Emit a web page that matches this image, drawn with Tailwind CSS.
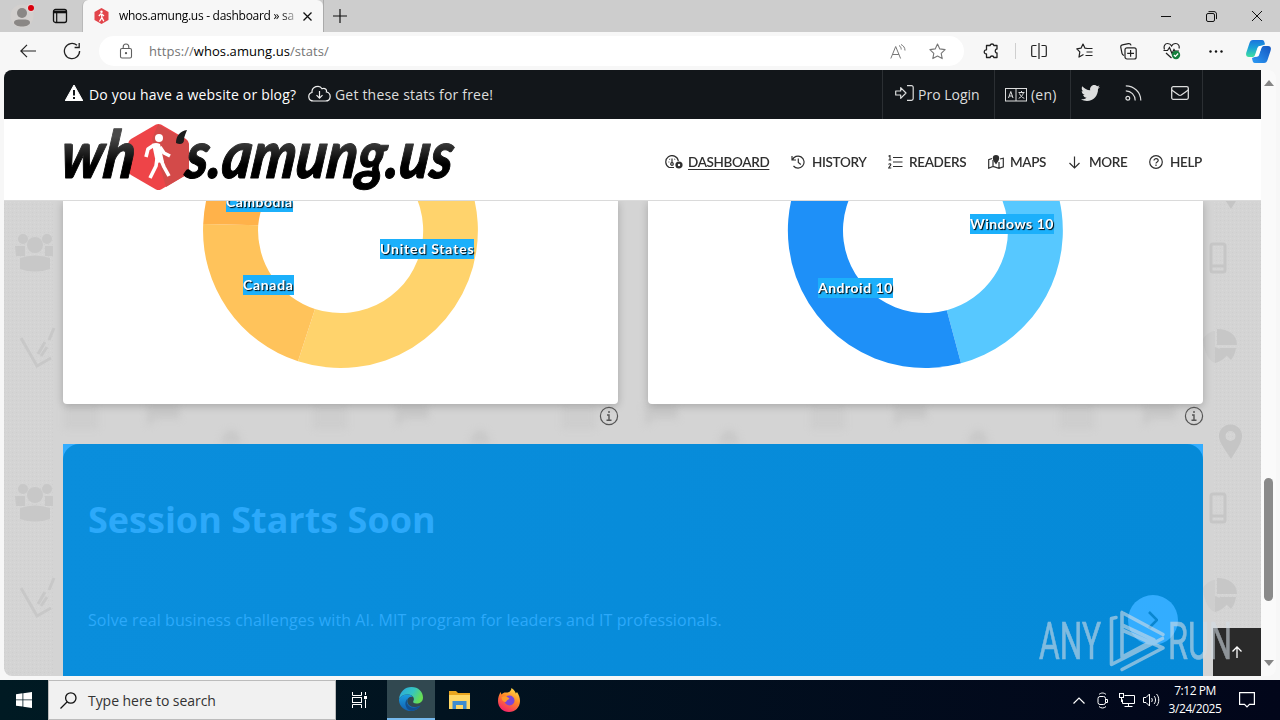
<!DOCTYPE html>
<html lang="en">
<head>
    <meta charset="UTF-8">
    <meta name="viewport" content="width=device-width, initial-scale=1.0">
    <title>whos.amung.us - dashboard</title>
    <script src="https://cdn.jsdelivr.net/npm/@tailwindcss/browser@4"></script>
</head>
<body class="w-[1280px] h-[720px] overflow-hidden bg-[#f7f7f7] font-['Open_Sans',sans-serif] text-black flex flex-col">

    <!-- Tab strip -->
    <div class="h-8 shrink-0 bg-[#cdcdcd] flex items-stretch">
        <div class="w-[82px] flex items-center pl-[10px] gap-[17px] rounded-br-md">
            <svg class="w-6 h-6" viewBox="0 0 24 24">
                <circle cx="12" cy="12" r="11.5" fill="#d3d0ce"/>
                <circle cx="12" cy="9" r="5" fill="#8a8785"/>
                <path d="M4 18.500c0-2.500 3-3 8-3s8 .5 8 3c0 2.500-4 4-8 4s-8-1.500-8-4z" fill="#8a8785"/>
                <circle cx="21" cy="4" r="4.200" fill="#e3d5d5"/>
                <circle cx="21" cy="4" r="3" fill="#d9000d"/>
            </svg>
            <svg class="w-[18px] h-[18px]" viewBox="0 0 18 18" fill="none" stroke="#111">
                <rect x="2.500" y="2.500" width="13" height="13" rx="2" stroke-width="1.300"/>
                <path d="M2.500 5h13" stroke-width="2.600"/><path d="M5.700 5v10.500" stroke-width="1.200"/>
            </svg>
        </div>
        <div class="w-[241px] bg-[#f7f7f7] rounded-t-md flex items-center pl-[11px] border-l border-[#b9b9b9]">
            <svg class="w-[15px] h-4 shrink-0" viewBox="0 0 15 16">
                <path d="M7.500 0l7 4v8l-7 4-7-4V4z" fill="#e2454b"/>
                <circle cx="7.500" cy="3.700" r="1.200" fill="#fff"/>
                <path d="M7.300 5.500L4.800 8M7.400 5.500l.5 4-2.500 4M7.800 9.300l2 4M7.700 6l2.300 2" stroke="#fff" stroke-width="1.300" fill="none"/>
            </svg>
            <span class="ml-[10px] w-[177px] h-5 text-[12px] leading-5 tracking-[-0.28px] whitespace-nowrap bg-linear-to-r from-black from-90% to-[#ccc] bg-clip-text text-transparent">whos.amung.us - dashboard » sa</span>
            <svg class="w-[9px] h-[9px] ml-[7px] shrink-0" viewBox="0 0 9 9" stroke="#111" stroke-width="1.300"><path d="M.5.5l8 8M8.500.5l-8 8"/></svg>
        </div>
        <div class="flex-1 flex items-center border-l border-[#aaa] pl-[9px] pr-[18px]">
            <svg class="w-[14px] h-[14px]" viewBox="0 0 14 14" stroke="#111" stroke-width="1.200"><path d="M7 0v14M0 7h14"/></svg>
            <div class="ml-auto flex items-center gap-[35px]">
                <svg class="w-[10px] h-[10px]" viewBox="0 0 10 10" stroke="#111"><path d="M0 5.500h10"/></svg>
                <svg class="w-[11px] h-[11px]" viewBox="0 0 11 11" fill="none" stroke="#111"><rect x=".5" y="2.500" width="8" height="8" rx="1.500"/><path d="M2.500.6H8c1.500 0 2.500 1 2.500 2.500v5"/></svg>
                <svg class="w-[10px] h-[10px]" viewBox="0 0 10 10" stroke="#111"><path d="M0 0l10 10M10 0L0 10"/></svg>
            </div>
        </div>
    </div>

    <!-- Toolbar -->
    <div class="h-[38px] shrink-0 flex items-center pl-5 pr-[9px]">
        <svg class="w-4 h-[14px]" viewBox="0 0 16 14" fill="none" stroke="#222" stroke-width="1.200"><path d="M16 7H.8M7 .8L.8 7 7 13.200"/></svg>
        <svg class="w-[18px] h-[18px] ml-[27px]" viewBox="0 0 18 18" fill="none" stroke="#222" stroke-width="1.300"><path d="M16.600 9A7.600 7.600 0 1 1 14 3.300M16.200 1v4.500h-4.600"/></svg>
        <div class="ml-[18px] w-[865px] h-[30px] rounded-full bg-white flex items-center pl-5 pr-[18px]">
            <svg class="w-[14px] h-4" viewBox="0 0 14 16" fill="none" stroke="#5f5f5f" stroke-width="1.100"><rect x="1.500" y="5.500" width="11" height="9.500" rx="1.500"/><path d="M4.200 5.500V4a2.800 3 0 0 1 5.600 0v1.500"/><circle cx="7" cy="10.200" r=".6" fill="#5f5f5f"/></svg>
            <span class="ml-4 mt-px text-[13px] tracking-[0.06px] text-[#757575] whitespace-nowrap">https://<span class="text-black">whos.amung.us</span>/stats/</span>
            <svg class="w-4 h-[15px] ml-auto" viewBox="0 0 16 15" fill="none" stroke="#777"><path d="M.8 14.500L5.700 2.500l4.900 12M2.500 10.500h6.400M9 1.500c1.600.9 2.200 2.300 2.200 4M11 .5c2.600 1.200 4 3.300 4 6"/></svg>
            <svg class="w-[17px] h-[17px] ml-[23px]" viewBox="0 0 17 17" fill="none" stroke="#777" stroke-width="1.100" stroke-linejoin="round"><path d="M8.500 1l2.300 4.900 5.300.7-3.900 3.700 1 5.300-4.700-2.600-4.700 2.600 1-5.300L.9 6.600l5.300-.7z"/></svg>
        </div>
        <svg class="w-[17px] h-[17px] ml-[19px]" viewBox="0 0 17 17" fill="none" stroke="#222" stroke-width="1.300" stroke-linejoin="round"><path d="M5 2.500h2.200c0-2 3.600-2 3.600 0H14V6c-2.300-.2-2.300 4.200 0 4v4.500h-3.200c0-2-3.600-2-3.600 0H3.500V11C.5 11.300.5 6.500 3.500 6.800V2.500z"/></svg>
        <div class="w-px h-4 bg-[#cfcfcf] ml-[15px]"></div>
        <svg class="w-4 h-4 ml-[15px]" viewBox="0 0 16 16" fill="none" stroke="#222" stroke-width="1.200"><path d="M5.500 2.500H2A1.300 1.300 0 0 0 .7 3.800v8.400A1.300 1.300 0 0 0 2 13.500h3.500M10.500 2.500H14a1.300 1.300 0 0 1 1.300 1.300v8.400a1.300 1.300 0 0 1-1.300 1.300h-3.500M8 0v16"/></svg>
        <svg class="w-[17px] h-4 ml-[29px]" viewBox="0 0 17 16" fill="none" stroke="#222" stroke-width="1.200" stroke-linejoin="round"><path d="M11.500 5.500L9 5.200 7 1 5 5.200.8 5.800l3 3.100-.8 5.200 4.500-2.600M10 5.500h6.500M10.500 9H16.500M9.500 12.500h7"/></svg>
        <svg class="w-[17px] h-[17px] ml-[27px]" viewBox="0 0 17 17" fill="none" stroke="#222" stroke-width="1.200"><path d="M4 12.500C2.700 12 2.200 11.300 2 10.300L.8 4.400C.5 3 1.200 2.200 2.400 1.900l6-1.200c1.300-.2 2.300.4 2.700 1.700"/><rect x="5" y="4.800" width="11.200" height="11.200" rx="2"/><path d="M10.600 7v6.800M7.200 10.400H14"/></svg>
        <svg class="w-[18px] h-[18px] ml-[26px]" viewBox="0 0 18 18" fill="none" stroke="#222" stroke-width="1.200"><path d="M1.500 7.500C.3 4 2 1.500 4.500 1.500 6.500 1.500 8 2.800 8.600 4c.6-1.200 2-2.500 4.100-2.500 2.500 0 4.100 2.300 3.300 5M.5 8.500h4l2-3 2.500 6 2-4 1 1.500h4M3 11l5.500 5"/><circle cx="13" cy="13" r="4.200" fill="#15803d" stroke="none"/><path d="M10.900 13l1.500 1.500 2.700-3" stroke="#fff"/></svg>
        <svg class="w-[14px] h-[3px] ml-[28px]" viewBox="0 0 14 3" fill="#111"><circle cx="1.500" cy="1.500" r="1.200"/><circle cx="7" cy="1.500" r="1.200"/><circle cx="12.500" cy="1.500" r="1.200"/></svg>
        <svg class="w-[25px] h-[23px] ml-auto" viewBox="0 0 25 23">
            <defs>
                <linearGradient id="copA" x1="0" y1="0" x2="0" y2="1"><stop offset="0" stop-color="#1b74dd"/><stop offset=".45" stop-color="#1aa0d8"/><stop offset="1" stop-color="#3fe0a0"/></linearGradient>
                <linearGradient id="copB" x1="1" y1="0" x2="0" y2="1"><stop offset="0" stop-color="#1455c0"/><stop offset="1" stop-color="#2c9bf5"/></linearGradient>
            </defs>
            <path d="M7 0h9c2 0 2.500 2 3 4.500l-5 1.500c-1.500 0-2.200 1-2.800 2.500L9 15c-.6 1.500-1.500 2-3 2H3c-3 0-3.400-2.500-2.500-5L3.500 3C4.200 1 5 0 7 0z" fill="url(#copA)"/>
            <path d="M18 23H9c-2 0-2.500-2-3-5l4-1.500c1.500 0 2.500-1 3-2.500L15.500 8c.6-1.500 1.500-2 3-2H22c3 0 3.400 2.500 2.500 5l-3 9c-.7 2-1.500 3-3.500 3z" fill="url(#copB)"/>
            <path d="M12 7.500L9.500 15c-.4 1-.8 1.500-1.500 1.800h3c1 0 1.800-.8 2.200-2L15.500 7c.3-.6.600-1 1-1h-2.500c-1 0-1.600.5-2 1.500z" fill="#fff"/>
        </svg>
    </div>

    <!-- Viewport -->
    <div class="mx-1 h-[606px] shrink-0 flex rounded-lg overflow-hidden bg-[#fafafa]">
        <div class="w-[1257px] shrink-0 flex flex-col relative bg-[#d4d4d4]">
            <div class="h-[49px] shrink-0 bg-[#12161a] text-[#dcdddd] flex items-stretch pl-[61px] pr-[58px] text-[14px]">
                <div class="flex items-center whitespace-nowrap text-white">
                    <svg class="w-[18px] h-4 -mt-1" viewBox="0 0 18 16"><path d="M9 0L18 16H0z" fill="#fff" stroke="#fff" stroke-linejoin="round"/><path d="M9 5v5.500M9 12v2" stroke="#12161a" stroke-width="2"/></svg>
                    <span class="ml-[6px] w-[207px] tracking-[0.17px]">Do you have a website or blog?</span>
                    <svg class="w-[23px] h-[17px] ml-3 -mt-[3px]" viewBox="0 0 23 17" fill="none" stroke="#eee" stroke-width="1.200"><path d="M5.500 16C-.5 16-.5 8.500 4 7.500 3.500 1.500 11.500-.8 14 3.800c3-1.200 5 .8 4.400 3.200C23.600 8 23.500 16 17.500 16zM11.500 6v7M8.500 10.200l3 3 3-3"/></svg>
                    <span class="ml-1 text-[#dcdddd] tracking-[0.19px]">Get these stats for free!</span>
                </div>
                <div class="ml-auto flex items-stretch whitespace-nowrap">
                    <div class="w-[112px] border-l border-[#2b2f33] flex items-center pl-3">
                        <svg class="w-[19px] h-4 -mt-[3px]" viewBox="0 0 19 16" fill="none" stroke="#dcdddd" stroke-width="1.200" stroke-linejoin="round"><path d="M.7 6v4h5v3.300L11 8 5.700 2.700V6zM12 .7h4.500A1.700 1.700 0 0 1 18.200 2.400v11.200a1.700 1.700 0 0 1-1.700 1.700H12"/></svg>
                        <span class="ml-1">Pro Login</span>
                    </div>
                    <div class="w-[76px] border-l border-[#2b2f33] flex items-center pl-[10px]">
                        <svg class="w-[22px] h-[14px]" viewBox="0 0 22 14" fill="none" stroke="#dcdddd"><rect x=".5" y=".5" width="21" height="12.500"/><path d="M11 .5V13M3.500 10l2.300-6.500L8 10M4.300 8h3M13.500 4.500h6M16.500 3v1.500M18.500 4.500c-.8 3-2.500 4.800-4.800 5.800M14.500 5.500c1 2.500 2.500 4 4.800 4.800"/></svg>
                        <span class="ml-1 tracking-[0.2px]">(en)</span>
                    </div>
                    <div class="w-[133px] border-x border-[#2b2f33] flex items-center pl-[10px] pb-[3px]">
                        <svg class="w-[19px] h-4" viewBox="0 0 19 16" fill="#dcdddd"><path d="M19 2l-2 2c.2 6.500-4.500 12-11 12-2.200 0-4.300-.6-6-1.700 2 .2 4-.4 5.600-1.600-1.600 0-3-1.200-3.500-2.700h1.600C1.900 9.500.7 8 .7 6.100l1.700.5C.7 5.400.2 3.200 1.300 1.300 3.200 3.700 6 5.200 9.200 5.300 8.600 2.600 10.500 0 13.200 0c1.100 0 2.200.5 2.900 1.300L18.500.4 17 2.500z"/></svg>
                        <svg class="w-[17px] h-4 ml-[25px]" viewBox="0 0 17 16" fill="none" stroke="#dcdddd" stroke-width="1.200"><circle cx="2.800" cy="13.200" r="1.900"/><path d="M.8 5.800c5.200 0 9.400 4.200 9.400 9.700M.8.8C8.800.8 15.800 7 15.800 15.500"/></svg>
                        <svg class="w-[18px] h-[14px] ml-[29px]" viewBox="0 0 18 14" fill="none" stroke="#dcdddd" stroke-width="1.300"><rect x=".7" y=".7" width="16.600" height="12.600" rx="1.500"/><path d="M.7 4l7 5c1 .6 1.600.6 2.600 0l7-5"/></svg>
                    </div>
                </div>
            </div>

            <div class="h-[82px] shrink-0 bg-white border-b border-[#dadada] flex items-center justify-between pl-[59px] pr-[58px] relative z-10">
                <svg class="w-[394px] h-[81px] overflow-visible" viewBox="63 119 394 81">
                    <defs><linearGradient id="ink" x1="0" y1="0" x2="0" y2="1"><stop offset=".3" stop-color="#4a4a4a"/><stop offset=".65" stop-color="#000"/></linearGradient></defs>
                    <path d="M156 124.500q2.500-1.200 5 0l25 14.500q3 2 3 5v26q0 3-3 5l-25 14.500q-2.500 1.200-5 0l-25-14.500q-3-2-3-5v-26q0-3 3-5z" fill="#ee4448"/>
                    <path d="M158 124.500L186 140q3 2 3 5v25q0 3-3 5l-20 12-14-48z" fill="#d34a49"/>
                    <circle cx="159" cy="138" r="4" fill="#fff"/>
                    <path d="M154 145l-6 4-2 8M157 159l-1 7-6 12M161 160l3 7 5 9M160 147l4 6 6 3" fill="none" stroke="#fff" stroke-width="3.600" stroke-linejoin="round"/>
                    <path d="M152 144q4-2 8 0l4 18-8 1z" fill="#fff"/>
                    <g font-family="Lato, sans-serif" font-weight="900" font-style="italic" fill="url(#ink)" stroke="url(#ink)" stroke-width="1" stroke-linejoin="round">
                        <text transform="translate(59 178) skewX(-7)" font-size="66" textLength="74" lengthAdjust="spacingAndGlyphs">wh</text>
                        <text transform="translate(184 178) skewX(-7)" font-size="66" textLength="267" lengthAdjust="spacingAndGlyphs">s.amung.us</text>
                    </g>
                    <path d="M187 130c-7 1-11 6-11 13 4 2 8 1 8-3 0-4 2-7 3-10z" fill="#1d1d1d"/>
                </svg>
                <nav class="flex items-center font-['Lato',sans-serif] font-semibold text-[13.5px] tracking-[-0.35px] text-[#2f2f2f] whitespace-nowrap pt-[5px]">
                    <svg class="w-[18px] h-[14px]" viewBox="0 0 18 14" fill="none" stroke="#2f2f2f" stroke-width="1.200"><path d="M9 12.500H4.200A6.300 6.300 0 1 1 13.300 6M7 3.500V8"/><circle cx="7" cy="9" r="1.300"/><path d="M3.500 7h.8M4.500 4l.5.500M10 4l-.5.5"/><circle cx="14" cy="10" r="2.400" stroke-width="2.400"/></svg>
                    <span class="ml-[5px] w-[81px] mt-px underline underline-offset-2">DASHBOARD</span>
                    <svg class="w-[14px] h-[14px] ml-[22px]" viewBox="0 0 14 14" fill="none" stroke="#2f2f2f" stroke-width="1.200"><path d="M1 1v4h4M1.400 5A6 6 0 1 1 2.500 11M7.300 3.500v4l2.500 2"/></svg>
                    <span class="ml-[7px] w-[55px] mt-px">HISTORY</span>
                    <svg class="w-[15px] h-[14px] ml-[21px]" viewBox="0 0 15 14" fill="none" stroke="#2f2f2f" stroke-width="1.100"><path d="M5 2.500h9.500M5 7h9.500M5 11.500h9.500M.5 1.200l1.500-.7V5M.5 5H3.300M.5 9.500c1-1.300 2.700-.6 2.200.6L.6 13H3.300"/></svg>
                    <span class="ml-[6px] w-[58px] mt-px">READERS</span>
                    <svg class="w-[16px] h-[14px] ml-[21px]" viewBox="0 0 16 14" fill="none" stroke="#2f2f2f" stroke-width="1.200"><path d="M4 3.500L.7 4.700v8.500L5 11.500l6 1.800 4.300-1.500V3.200L12 4M5 5v6.500M11 7v6"/><path d="M8 9.500C6 6.500 4.800 5 4.800 3.200a3.200 3.200 0 0 1 6.400 0C11.200 5 10 6.500 8 9.500z" fill="#2f2f2f" stroke="none"/></svg>
                    <span class="ml-[6px] w-[36px] mt-px">MAPS</span>
                    <svg class="w-[13px] h-[13px] ml-[22px]" viewBox="0 0 13 13" fill="none" stroke="#2f2f2f" stroke-width="1.200"><path d="M6.500 0.500v11.500M1.500 7l5 5 5-5"/></svg>
                    <span class="ml-[8px] w-[38px] mt-px">MORE</span>
                    <svg class="w-[14px] h-[14px] ml-[22px]" viewBox="0 0 14 14" fill="none" stroke="#2f2f2f" stroke-width="1.200"><circle cx="7" cy="7" r="6.300"/><path d="M5 5.500c0-2.500 4.200-2.300 4.200 0C9.200 7 7 6.800 7 8.500M7 9.500v1.500"/></svg>
                    <span class="ml-[7px] w-[33px] mt-px">HELP</span>
                </nav>
            </div>

            <!-- Repeating backdrop icons -->
            <svg class="absolute left-0 top-[131px] w-[1257px] h-[475px]" viewBox="4 201 1257 475">
                <defs>
                    <g id="people" fill="#c8c8c8"><circle cx="8" cy="5" r="5"/><circle cx="32" cy="5" r="5"/><circle cx="20" cy="11" r="8"/><path d="M0 12h10v10H1zM30 12h8v10h-8z"/><path d="M5 24q15-5 30 0v11q-15 5-30 0z"/></g>
                    <path id="check" d="M0 0l16 28 14-8M17 16l7-12M20 18l6-9M28 2l5-12" fill="none" stroke="#c8c8c8" stroke-width="3"/>
                    <g id="phone" fill="none" stroke="#c6c6c6" stroke-width="3"><rect x="0" y="0" width="14" height="28" rx="2"/><path d="M0 22h14"/></g>
                    <g id="pie" fill="#c7c7c7"><path d="M0 16v16q8-2 14-10z"/><path d="M2-2v16h20C22 4 14-2 2-2z"/><path d="M21 17H4l12 12q4-5 5-12z"/><path d="M-12 8q6-8 12-8v32q-10-4-12-24z" opacity=".5"/></g>
                    <path id="pin" d="M12 34C6 24 0 18 0 11a11.500 11.500 0 0 1 23 0c0 7-5 13-11 23zM11.500 6a5 5 0 1 0 0 10 5 5 0 0 0 0-10z" fill="#c5c5c5"/>
                    <filter id="soft"><feGaussianBlur stdDeviation="3"/></filter>
                    <filter id="faint"><feGaussianBlur stdDeviation=".7"/></filter>
                    <pattern id="dots" width="4" height="4" patternUnits="userSpaceOnUse"><rect width="1" height="1" fill="#cecece"/><rect x="2" y="2" width="1" height="1" fill="#d9d9d9"/></pattern>
                </defs>
                <rect x="4" y="201" width="50" height="475" fill="url(#dots)"/>
                <rect x="1213" y="201" width="48" height="475" fill="url(#dots)"/>
                <g filter="url(#faint)">
                    <use href="#people" x="15" y="234"/><use href="#people" x="15" y="484"/>
                    <use href="#check" x="21" y="338"/><use href="#check" x="21" y="588"/>
                    <use href="#phone" x="1211" y="244"/><use href="#phone" x="1211" y="494"/>
                    <use href="#pie" x="1215" y="331"/><use href="#pie" x="1215" y="580"/>
                    <use href="#pin" x="1219" y="175"/><use href="#pin" x="1219" y="425"/>
                </g>
                <g filter="url(#soft)" fill="#c9c9c9">
                    <path d="M64 405h34v24H64zM313 405h34v24h-34zM562 405h34v24h-34zM811 405h34v24h-34zM1060 405h34v24h-34z" opacity=".6"/>
                    <path d="M146 405h34v14h-24l-8 8zM395 405h34v14h-24l-8 8zM644 405h34v14h-24l-8 8zM893 405h34v14h-24l-8 8zM1142 405h34v14h-24l-8 8z"/>
                    <path d="M221 444a10 14 0 0 1 20 0zM470 444a10 14 0 0 1 20 0zM719 444a10 14 0 0 1 20 0zM968 444a10 14 0 0 1 20 0z"/>
                </g>
            </svg>

            <!-- Chart cards -->
            <div class="flex gap-[30px] px-[59px] h-[203px] shrink-0 relative">
                <div class="w-[555px] shrink-0 bg-white rounded-b-[4px] shadow-[0_2px_8px_#00000038] relative">
                    <svg class="w-full h-full" viewBox="63 201 555 203">
                        <path d="M340.500 93A137.500 137.500 0 1 1 298 361.300L315 308.900A82.500 82.500 0 1 0 340.500 148z" fill="#ffd36c"/>
                        <path d="M298 361.300A137.500 137.500 0 0 1 203.200 224L258.200 225.300A82.500 82.500 0 0 0 315 308.900z" fill="#ffc35b"/>
                        <path d="M203.200 224A137.500 137.500 0 0 1 230 148L276 182A82.500 82.500 0 0 0 258.200 225.300z" fill="#ffb24a"/>
                    </svg>
                    <span class="absolute left-[163px] -top-[9px] w-[67px] h-5 bg-[#1cb0fb] text-white font-['Lato',sans-serif] font-bold text-[14px] leading-5 tracking-[0.5px] whitespace-nowrap text-shadow-[1px_1px_1px_#000]">Cambodia</span>
                    <span class="absolute left-[317px] top-[38px] w-[94px] h-5 bg-[#1cb0fb] text-white font-['Lato',sans-serif] font-bold text-[14px] leading-5 tracking-[0.8px] whitespace-nowrap text-shadow-[1px_1px_1px_#000]">United States</span>
                    <span class="absolute left-[180px] top-[74px] w-[51px] h-5 bg-[#1cb0fb] text-white font-['Lato',sans-serif] font-bold text-[14px] leading-5 tracking-[0.7px] whitespace-nowrap text-shadow-[1px_1px_1px_#000]">Canada</span>
                </div>
                <div class="w-[555px] shrink-0 bg-white rounded-b-[4px] shadow-[0_2px_8px_#00000038] relative">
                    <svg class="w-full h-full" viewBox="648 201 555 203">
                        <path d="M925.500 93A137.500 137.500 0 0 1 961 363.300L946.800 310.200A82.500 82.500 0 0 0 925.500 148z" fill="#57c8ff"/>
                        <path d="M961 363.300A137.500 137.500 0 1 1 925.500 93V148A82.500 82.500 0 1 0 946.800 310.200z" fill="#1e90f8"/>
                    </svg>
                    <span class="absolute left-[322px] top-[13px] w-[84px] h-5 bg-[#1cb0fb] text-white font-['Lato',sans-serif] font-bold text-[14px] leading-5 tracking-[0.5px] whitespace-nowrap text-shadow-[1px_1px_1px_#000]">Windows 10</span>
                    <span class="absolute left-[170px] top-[77px] w-[75px] h-5 bg-[#1cb0fb] text-white font-['Lato',sans-serif] font-bold text-[14px] leading-5 tracking-[0.5px] whitespace-nowrap text-shadow-[1px_1px_1px_#000]">Android 10</span>
                </div>
            </div>
            <div class="flex gap-[567px] pl-[595px] pt-[2px] h-10 shrink-0 relative">
                <svg class="w-5 h-5" viewBox="0 0 20 20" fill="none" stroke="#555"><circle cx="10" cy="10" r="8.600" stroke-width="1.200"/><path d="M10 5v2M8 9h2v5M7.500 14.300h5" stroke-width="1.400"/></svg>
                <svg class="w-5 h-5 -ml-[2px]" viewBox="0 0 20 20" fill="none" stroke="#555"><circle cx="10" cy="10" r="8.600" stroke-width="1.200"/><path d="M10 5v2M8 9h2v5M7.500 14.300h5" stroke-width="1.400"/></svg>
            </div>

            <!-- Ad banner -->
            <div class="ml-[59px] w-[1140px] flex-1 bg-[#33adff] relative">
                <div class="h-full rounded-t-[16px] bg-linear-to-r from-[#0a8edc] to-[#058ad8] text-[#2ca9fa] pl-[25px] pt-[50px]">
                    <h2 class="text-[36px] leading-[52px] font-bold whitespace-nowrap">Session Starts Soon</h2>
                    <p class="mt-[62px] text-[16px] tracking-[0.08px] leading-6 whitespace-nowrap">Solve real business challenges with AI. MIT program for leaders and IT professionals.</p>
                </div>
                <div class="absolute left-[1065px] top-[151px] w-[50px] h-[50px] rounded-full bg-[#33adff] flex items-center justify-center">
                    <svg class="w-[10px] h-[18px]" viewBox="0 0 10 18" fill="none" stroke="#0a86d0" stroke-width="2.500"><path d="M1 1l8 8-8 8"/></svg>
                </div>
            </div>
            <div class="absolute right-0 bottom-0 w-12 h-12 bg-[#2a2a2a] flex items-center justify-center">
                <svg class="w-[10px] h-[12px]" viewBox="0 0 10 12" fill="none" stroke="#fff" stroke-width="1.300"><path d="M5 12V1M.5 5.500L5 1l4.500 4.500"/></svg>
            </div>
            <!-- Watermark -->
            <svg class="absolute left-[1031px] top-[536px] w-[200px] h-[70px] overflow-visible" viewBox="1035 606 200 70" opacity=".6">
                <g font-family="Roboto, sans-serif" font-weight="400" font-size="52" fill="#d2dce4" stroke="#d2dce4" stroke-width=".7">
                    <text x="1039" y="659" textLength="62" lengthAdjust="spacingAndGlyphs">ANY</text>
                    <text x="1168" y="659" textLength="64" lengthAdjust="spacingAndGlyphs">RUN</text>
                </g>
                <path d="M1116 617.500l-4.500 1v46l51-26M1122 612.500l41 22M1122 612.500v43M1122 630l41 18-41 21.500M1122 625l32 15-32 17" fill="none" stroke="#d2dce4" stroke-width="3.600" stroke-linejoin="round" stroke-linecap="round"/>
            </svg>
        </div>
        <!-- Scrollbar -->
        <div class="flex-1 flex flex-col items-center pt-[10px] pb-[10px]">
            <svg class="w-[10px] h-[6px]" viewBox="0 0 10 6"><path d="M5 0l5 6H0z" fill="#858585"/></svg>
            <div class="mt-[392px] w-[9px] h-[123px] rounded-full bg-[#8a8a8a]"></div>
            <svg class="w-[10px] h-[6px] mt-auto" viewBox="0 0 10 6"><path d="M0 0h10L5 6z" fill="#858585"/></svg>
        </div>
    </div>

    <!-- Taskbar -->
    <div class="mt-1 h-10 shrink-0 bg-linear-to-r from-[#001a23] to-[#02061a] flex items-center">
        <div class="w-12 flex justify-center">
            <svg class="w-4 h-4" viewBox="0 0 16 16" fill="#fff"><path d="M0 2.200l6.500-.9v6.200H0zM7.300 1.200L16 0v7.500H7.300zM0 8.300h6.500v6.300L0 13.700zM7.300 8.300H16V16l-8.700-1.300z"/></svg>
        </div>
        <div class="w-[288px] h-full bg-[#f1f1f1] border border-[#bcbcbc] flex items-center pl-[11px]">
            <svg class="w-[17px] h-[17px]" viewBox="0 0 17 17" fill="none" stroke="#111" stroke-width="1.300"><circle cx="10.800" cy="6" r="5.200"/><path d="M7 10L.5 16.500"/></svg>
            <span class="ml-[11px] mt-px text-[14px] tracking-[-0.05px] text-[#333] whitespace-nowrap">Type here to search</span>
        </div>
        <div class="w-[51px] flex justify-center pr-[4px]">
            <svg class="w-[17px] h-[16px]" viewBox="0 0 17 16" fill="none" stroke="#fff"><path d="M1.500 0v3.500h9V0M1.500 16v-3.500h9V16M14.500 0v3M14.500 7.500V16"/><rect x="1.500" y="5.500" width="9" height="5"/><rect x="13.500" y="4.500" width="2" height="2" fill="#fff"/></svg>
        </div>
        <div class="w-12 h-full bg-[#314850] border-b-2 border-[#76b9ed] flex items-center justify-center">
            <svg class="w-6 h-6" viewBox="0 0 24 24">
                <defs>
                    <linearGradient id="edgeA" x1="0" y1="0" x2="1" y2=".4"><stop offset="0" stop-color="#2aa5e0"/><stop offset=".6" stop-color="#35c5c0"/><stop offset="1" stop-color="#66dd55"/></linearGradient>
                    <linearGradient id="edgeB" x1="0" y1="0" x2="0" y2="1"><stop offset="0" stop-color="#1a9de0"/><stop offset="1" stop-color="#1260b0"/></linearGradient>
                </defs>
                <path d="M0 12C1 4.500 6 0 12.500 0 19.500 0 24 5 24 10.500c0 4-3 6-6.500 6-3 0-4-1.200-3-2.700C16 11 13.500 8 9.500 7.500 5.500 7 1.500 9 0 12z" fill="url(#edgeA)"/>
                <path d="M0 12C1.500 9 5.500 7 9.500 7.500c2 .3 3.800 1.300 4.500 2.500-4-1-6.500 2-5.500 5.500C9.800 20 15 21.500 21.500 18.500 19.500 22 16 24 12 24 5 24-.5 18.500 0 12z" fill="url(#edgeB)"/>
                <path d="M9.500 10.500C7 13 7.500 17 10.500 19.500c3.500 2.300 8 1 11-1-2.500 5-8 5.500-10.500 5-5-2-6.500-9-1.500-13z" fill="#134f8f"/>
            </svg>
        </div>
        <div class="w-[49px] flex justify-center">
            <svg class="w-[21px] h-[18px]" viewBox="0 0 21 18"><path d="M0 0h7l2 2h12v16H0z" fill="#e9a51f"/><path d="M0 4h21v14H0z" fill="#ffd766"/><path d="M3.500 10h14v8h-3.500v-4H7v4H3.500z" fill="#3f8ccf"/></svg>
        </div>
        <div class="w-[49px] flex justify-center">
            <svg class="w-[22px] h-6" viewBox="0 0 22 24">
                <defs><linearGradient id="fox" x1=".8" y1="0" x2=".3" y2="1"><stop offset="0" stop-color="#ffe14a"/><stop offset=".45" stop-color="#ff8a26"/><stop offset="1" stop-color="#f5206b"/></linearGradient></defs>
                <path d="M13.500 0c3 2 4 4 4.300 5.500L19 4c2 3 3 6 3 9 0 6.500-5 11-11 11S0 19.500 0 13c0-3.500 1-6 2.500-9l1 2.500C5 5 6 4.500 7.500 4.500 10 5 13 4 13.500 0z" fill="url(#fox)"/>
                <circle cx="11.500" cy="12.500" r="5" fill="#7a46d8"/><path d="M3.500 9c4-2 7 0 8 2-2 .5-3 1.500-3.500 3C5 14 3.500 12 3.500 9z" fill="#ff9a2a"/>
            </svg>
        </div>
        <div class="ml-auto flex items-center text-white pr-[25px]">
            <svg class="w-3 h-[7px]" viewBox="0 0 12 7" fill="none" stroke="#fff" stroke-width="1.200"><path d="M.5 6.500L6 1l5.500 5.500"/></svg>
            <svg class="w-[12px] h-[17px] ml-[12px]" viewBox="0 0 12 17" fill="none" stroke="#fff"><path d="M2 2.500C4 .5 7 .5 9 2.500M2 14.500c2 2 5 2 7 0"/><rect x="1" y="4.500" width="7.500" height="8" rx="2"/><path d="M8.500 7.500h2v3h-2"/></svg>
            <svg class="w-[16px] h-[14px] ml-[10px]" viewBox="0 0 16 14" fill="none" stroke="#fff"><path d="M5.500 2.500h10v8H3.500v-4M9.500 10.500v3M5.500 13.500h8"/><rect x=".5" y=".5" width="4" height="4"/><path d="M2.500 4.500v4.500"/></svg>
            <svg class="w-[17px] h-[14px] ml-[8px]" viewBox="0 0 17 14" fill="none" stroke="#fff"><path d="M.5 4.500h2.500L6.500 1v12L3 9.500H.5zM8.500 5c1 1 1 3 0 4M11 3c2 2 2 6 0 8M13.500 1c3 3 3 9 0 12"/></svg>
            <div class="ml-[8px] w-[54px] text-[12px] leading-[18px] tracking-[-0.45px] text-center whitespace-nowrap">7:12 PM<br>3/24/2025</div>
            <svg class="w-[16px] h-[16px] ml-[17px]" viewBox="0 0 16 16" fill="none" stroke="#fff" stroke-width="1.200"><path d="M.6.6h14.800v11.800H10.500L8 15l-2.500-2.600H.6z"/></svg>
        </div>
    </div>
</body>
</html>
